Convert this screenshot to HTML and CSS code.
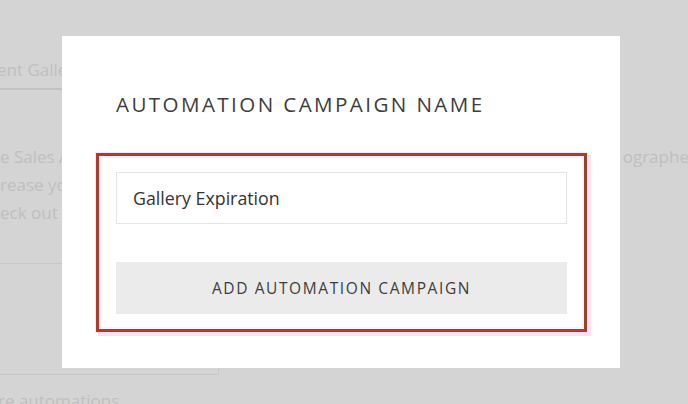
FILE: index.html
```html
<!DOCTYPE html>
<html>
<head>
<meta charset="utf-8">
<link rel="stylesheet" href="styles.css">
</head>
<body>
<div class="page">
  <div class="tab">ent Gallery Automations</div>
  <div class="para">
    <div class="line split"><span>e Sales Automations help photographers</span><span class="tail">ographers</span></div>
    <div class="line">rease your sales with timed emails</div>
    <div class="line">eck out our guide</div>
  </div>
  <div class="panel"></div>
  <div class="more">re automations</div>
</div>

<div class="overlay">
  <div class="modal">
    <h2 class="title">AUTOMATION CAMPAIGN NAME</h2>
    <div class="highlight">
      <div class="field">Gallery Expiration</div>
      <button class="btn">ADD AUTOMATION CAMPAIGN</button>
    </div>
  </div>
</div>
</body>
</html>
```

FILE: styles.css
```css
html, body {
  margin: 0;
  padding: 0;
}
body {
  width: 688px;
  height: 404px;
  overflow: hidden;
  background: #d4d4d4;
  font-family: "Open Sans", "Liberation Sans", sans-serif;
  position: relative;
}
.page {
  padding-top: 58px;
  color: #bfbfbf;
}
.tab {
  width: 62px;
  white-space: nowrap;
  overflow: hidden;
  font-size: 17px;
  line-height: 24px;
  padding-bottom: 6px;
  border-bottom: 2px solid #c2c2c2;
  text-indent: -3px;
}
.para {
  margin-top: 53px;
  font-size: 17px;
  line-height: 28px;
}
.line {
  white-space: nowrap;
  overflow: hidden;
}
.split {
  display: flex;
  justify-content: space-between;
}
.tail {
  margin-right: -16px;
}
.panel {
  margin-top: 36px;
  width: 218px;
  height: 110px;
  border-top: 1px solid #c8c8c8;
  border-right: 1px solid #c8c8c8;
  border-bottom: 1px solid #c8c8c8;
}
.more {
  margin-top: 14px;
  font-size: 17px;
  line-height: 24px;
  text-indent: -2px;
}

.overlay {
  position: absolute;
  left: 62px;
  top: 36px;
}
.modal {
  width: 558px;
  height: 332px;
  box-sizing: border-box;
  background: #fff;
  padding: 54px 53px 0 54px;
}
.title {
  margin: 0;
  font-size: 20.6px;
  line-height: 28px;
  font-weight: 400;
  letter-spacing: 2.4px;
  color: #3d3d3d;
}
.highlight {
  margin: 35px -20px 0 -20px;
  border: 3px solid #b23a2d;
  border-right-color: #8f4629;
  padding: 16px 17px 15px 17px;
  display: flex;
  flex-direction: column;
  gap: 38px;
  box-shadow: 0 0 0 1px #fbe4f4, 3px 3px 0 1px #fde0f5, inset 0 0 0 2px #fdf0fa;
}
.field {
  height: 52px;
  box-sizing: border-box;
  border: 1px solid #e4e4e4;
  padding: 0 16px;
  display: flex;
  align-items: center;
  font-size: 17.8px;
  color: #333;
}
.btn {
  height: 52px;
  border: 0;
  background: #ebebeb;
  font-family: "Open Sans", "Liberation Sans", sans-serif;
  font-size: 15.5px;
  letter-spacing: 1.6px;
  color: #3d3d3d;
  padding: 0;
}
```
